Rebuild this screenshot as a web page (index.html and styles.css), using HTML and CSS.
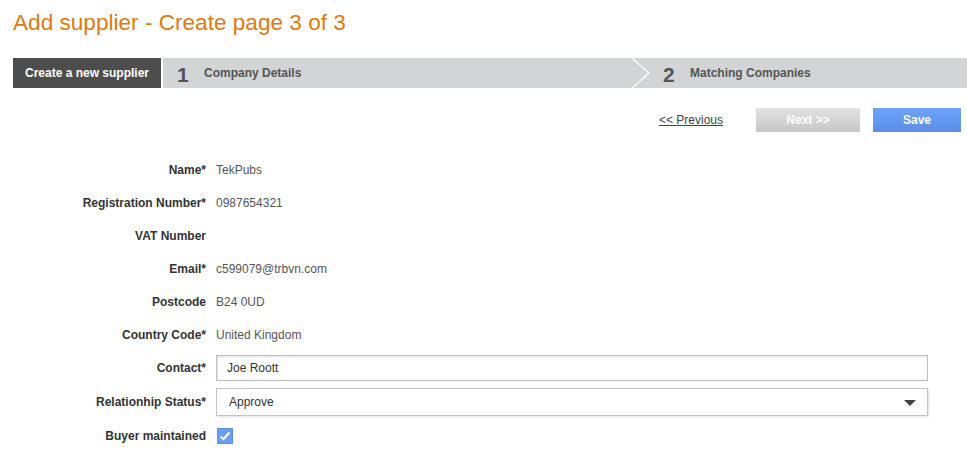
FILE: index.html
```html
<!DOCTYPE html>
<html lang="en">
<head>
    <meta charset="UTF-8">
    <title>Add supplier - Create page 3 of 3</title>
    <link rel="stylesheet" href="styles.css">
</head>
<body>
    <div class="page">
        <h1 class="title">Add supplier - Create page 3 of 3</h1>

        <div class="steps">
            <div class="step-current">Create a new supplier</div>
            <div class="step-track">
                <div class="step step-one">
                    <span class="step-num">1</span>
                    <span class="step-name">Company Details</span>
                </div>
                <svg class="chevron" width="18" height="30" viewBox="0 0 18 30">
                    <polyline points="0,0 17,15 0,30" fill="none" stroke="#ffffff" stroke-width="1.3"/>
                </svg>
                <div class="step step-two">
                    <span class="step-num">2</span>
                    <span class="step-name">Matching Companies</span>
                </div>
            </div>
        </div>

        <div class="actions">
            <a href="#" class="prev-link">&lt;&lt; Previous</a>
            <button class="btn btn-next" disabled>Next &gt;&gt;</button>
            <button class="btn btn-save">Save</button>
        </div>

        <div class="form">
            <label class="field-label">Name*</label>
            <div class="field-value">TekPubs</div>

            <label class="field-label">Registration Number*</label>
            <div class="field-value">0987654321</div>

            <label class="field-label">VAT Number</label>
            <div class="field-value"></div>

            <label class="field-label">Email*</label>
            <div class="field-value">c599079@trbvn.com</div>

            <label class="field-label">Postcode</label>
            <div class="field-value">B24 0UD</div>

            <label class="field-label">Country Code*</label>
            <div class="field-value">United Kingdom</div>

            <label class="field-label">Contact*</label>
            <div class="field-value">
                <input type="text" class="text-input" value="Joe Roott">
            </div>

            <label class="field-label row-select">Relationhip Status*</label>
            <div class="field-value row-select">
                <div class="select-box">Approve</div>
            </div>

            <label class="field-label row-check">Buyer maintained</label>
            <div class="field-value row-check">
                <span class="checkbox">
                    <svg width="16" height="16" viewBox="0 0 16 16">
                        <polyline points="3.5,8.5 6.5,11 12.5,4.5" fill="none" stroke="#ffffff" stroke-width="2"/>
                    </svg>
                </span>
            </div>
        </div>
    </div>
</body>
</html>
```

FILE: styles.css
```css
body {
    margin: 0;
    font-family: "Liberation Sans", Arial, sans-serif;
    font-size: 12px;
    color: #333;
    background-color: #ffffff;
}

.page {
    padding: 10px 0 0 13px;
}

.title {
    margin: 0;
    font-size: 22.6px;
    font-weight: normal;
    line-height: 26px;
    color: #e07a12;
}

/* step bar */
.steps {
    display: flex;
    height: 30px;
    margin-top: 22px;
}

.step-current {
    width: 148px;
    background-color: #4d4d4d;
    color: #ffffff;
    font-weight: bold;
    display: flex;
    align-items: center;
    justify-content: center;
    margin-right: 2px;
}

.step-track {
    flex: 1;
    display: flex;
    background-color: #d3d4d5;
}

.step {
    display: flex;
    align-items: center;
    color: #555;
}

.step-one {
    width: 455px;
    padding-left: 14px;
}

.step-two {
    flex: 1;
    padding-left: 13px;
}

.chevron {
    display: block;
    flex-shrink: 0;
}

.step-num {
    font-size: 21px;
    font-weight: bold;
    width: 27px;
    padding-top: 3px;
}

.step-name {
    font-weight: bold;
}

/* buttons */
.actions {
    display: flex;
    justify-content: flex-end;
    align-items: center;
    margin-top: 20px;
    padding-right: 6px;
}

.prev-link {
    color: #444;
    text-decoration: underline;
    margin-right: 33px;
}

.btn {
    height: 24px;
    border: none;
    color: #ffffff;
    font-family: "Liberation Sans", Arial, sans-serif;
    font-size: 12px;
    font-weight: bold;
    padding: 0;
}

.btn-next {
    width: 104px;
    background: linear-gradient(#e2e2e2, #c7c7c7);
    margin-right: 13px;
}

.btn-save {
    width: 88px;
    background: linear-gradient(#6fa3f8, #5b8de6);
}

/* form */
.form {
    display: grid;
    grid-template-columns: 193px 712px;
    grid-auto-rows: 33px;
    column-gap: 10px;
    align-items: center;
    margin-top: 21px;
}

.field-label {
    text-align: right;
    font-weight: bold;
    color: #333;
}

.field-value {
    color: #555;
}

.row-select {
    padding-top: 3px;
}

.row-check {
    padding-top: 4px;
}

.text-input {
    box-sizing: border-box;
    width: 712px;
    height: 26px;
    border: 1px solid #bdbdbd;
    box-shadow: inset 1px 1px 2px rgba(0, 0, 0, 0.12);
    padding: 0 10px;
    font-family: "Liberation Sans", Arial, sans-serif;
    font-size: 12px;
    color: #333;
    outline: none;
    display: block;
    margin-top: 1px;
}

.select-box {
    position: relative;
    box-sizing: border-box;
    height: 28px;
    line-height: 26px;
    border: 1px solid #c4c4c4;
    box-shadow: 1px 1px 2px rgba(0, 0, 0, 0.12);
    padding-left: 12px;
    color: #333;
}

.select-box::after {
    content: "";
    position: absolute;
    right: 11px;
    top: 11px;
    border-left: 6px solid transparent;
    border-right: 6px solid transparent;
    border-top: 6px solid #444;
}

.checkbox {
    display: block;
    width: 16px;
    height: 16px;
    margin-left: 1px;
    background-color: #6b9ef2;
    border: 1px solid #5b8de0;
    box-sizing: border-box;
}

.checkbox svg {
    display: block;
    margin: -1px 0 0 -1px;
}
```
